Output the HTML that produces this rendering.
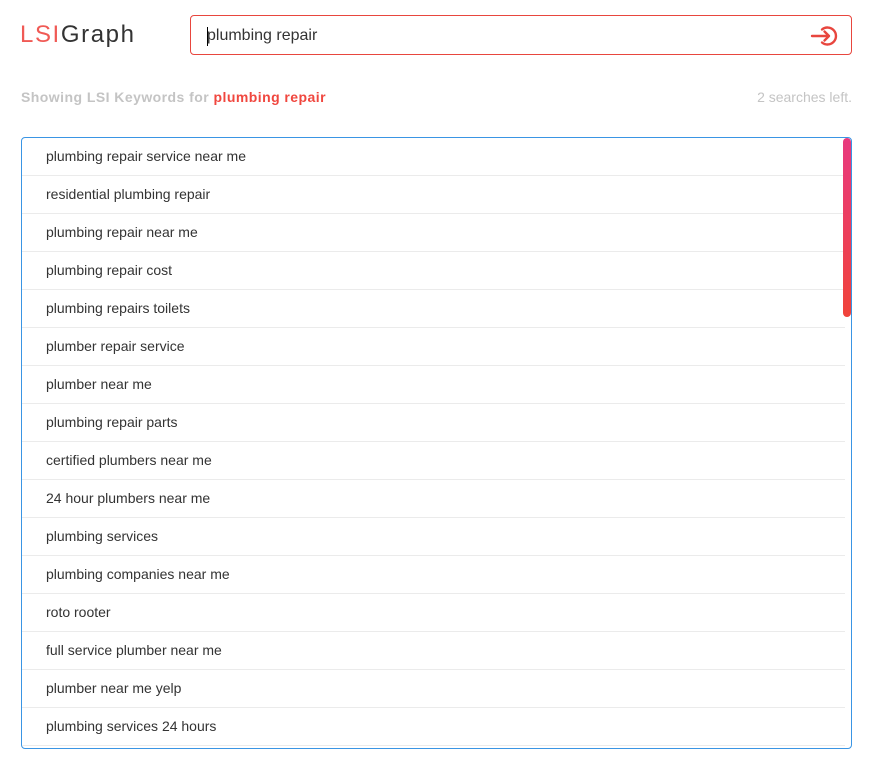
<!DOCTYPE html>
<html><head><meta charset="utf-8"><style>
*{margin:0;padding:0;box-sizing:border-box}
body{width:890px;height:783px;background:#fff;font-family:"Liberation Sans",Arial,sans-serif;position:relative;overflow:hidden}
.logo{position:absolute;left:20px;top:21px;font-size:24px;letter-spacing:1.6px;font-family:"Liberation Sans",sans-serif}
.logo .a{color:#f05a55}.logo .b{color:#333}
.search{position:absolute;left:190px;top:15px;width:662px;height:40px;border:1.5px solid #e8463e;border-radius:4px}
.search .t{position:absolute;left:16px;top:11px;font-size:16px;color:#333}
.search .c{position:absolute;left:16px;top:11px;width:1px;height:19px;background:#000}
.search svg{position:absolute;left:619px;top:8px}
.show{position:absolute;left:21px;top:89px;font-size:14px;font-weight:bold;color:#c4c4c4;letter-spacing:.45px}
.show span{color:#f0473f}
.left{position:absolute;right:38px;top:89px;font-size:14px;color:#c4c4c4}
.list{position:absolute;left:21px;top:137px;width:831px;height:612px;border:1px solid #3a95e4;border-radius:4px;overflow:hidden}
.row{height:38px;border-bottom:1px solid #ebebeb;padding-left:24px;line-height:37px;font-size:14px;color:#333;width:823px}
.sb{position:absolute;right:0;top:0;width:8px;height:179px;border-radius:4px;background:linear-gradient(#e8397f,#f0433a)}
</style></head><body>
<div class="logo"><span class="a">LSI</span><span class="b">Graph</span></div>
<div class="search"><div class="c"></div><div class="t">plumbing repair</div>
<svg width="28" height="24" viewBox="0 0 28 24" fill="none" stroke="#e8463e" stroke-width="2.4" stroke-linecap="round" stroke-linejoin="round"><path d="M12 5.5A8.5 8.5 0 1 1 12 18.5"/><path d="M2 12H19M14.5 7.5L19 12L14.5 16.5"/></svg></div>
<div class="show">Showing LSI Keywords for <span>plumbing repair</span></div>
<div class="left">2 searches left.</div>
<div class="list">
<div class="row">plumbing repair service near me</div>
<div class="row">residential plumbing repair</div>
<div class="row">plumbing repair near me</div>
<div class="row">plumbing repair cost</div>
<div class="row">plumbing repairs toilets</div>
<div class="row">plumber repair service</div>
<div class="row">plumber near me</div>
<div class="row">plumbing repair parts</div>
<div class="row">certified plumbers near me</div>
<div class="row">24 hour plumbers near me</div>
<div class="row">plumbing services</div>
<div class="row">plumbing companies near me</div>
<div class="row">roto rooter</div>
<div class="row">full service plumber near me</div>
<div class="row">plumber near me yelp</div>
<div class="row">plumbing services 24 hours</div>
<div class="sb"></div>
</div>
</body></html>
